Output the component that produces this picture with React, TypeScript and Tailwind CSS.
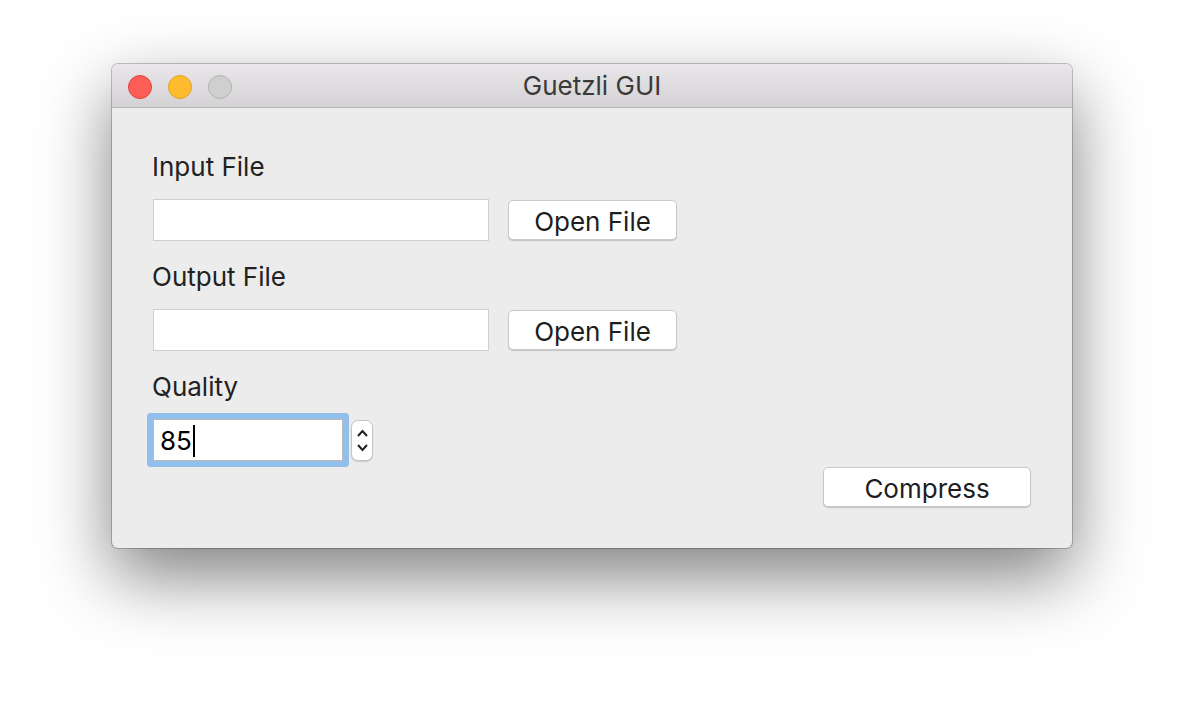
import React from "react";

const font = { fontFamily: 'Inter, "Liberation Sans", Arial, sans-serif' };

function Field() {
  return <div className="ml-[1px] w-[336px] h-[42px] bg-white border border-[#cfcfcf]" />;
}

function Btn({ label, w }: { label: string; w: string }) {
  return (
    <div
      className={`${w} h-[40px] pt-[3px] bg-white rounded-[5px] border border-[#c9c9c9] shadow-[0_1px_1px_rgba(0,0,0,0.18)] flex items-center justify-center text-[26px] leading-none text-[#1e1e1e]`}
    >
      {label}
    </div>
  );
}

export default function App() {
  return (
    <div className="w-[1184px] h-[708px] bg-white pl-[112px] pt-[64px]" style={font}>
      <div className="w-[960px] h-[484px] rounded-[6px] bg-[#ececec] shadow-[0_0_0_1px_rgba(0,0,0,0.22),0_28px_70px_rgba(0,0,0,0.5)] flex flex-col overflow-hidden">
        <div className="h-[44px] shrink-0 bg-gradient-to-b from-[#e9e7e9] to-[#d4d2d4] border-b border-[#b5b5b5] relative flex items-center justify-center">
          <div className="absolute left-[16px] top-[11px] flex gap-[16px]">
            <div className="w-[24px] h-[24px] rounded-full bg-[#fd5f57] border border-[#e0443e]" />
            <div className="w-[24px] h-[24px] rounded-full bg-[#febc2e] border border-[#dea123]" />
            <div className="w-[24px] h-[24px] rounded-full bg-[#d0cfd0] border border-[#b4b3b4]" />
          </div>
          <span className="text-[26px] text-[#3a3a3a] leading-none pt-[1px]">Guetzli GUI</span>
        </div>
        <div className="pl-[40px] pt-[45px] pr-[41px] flex flex-col">
          <div className="h-[28px] flex items-center text-[26px] leading-none text-[#222]">Input File</div>
          <div className="mt-[18px] flex items-center gap-[19px]">
            <Field />
            <Btn label="Open File" w="w-[169px]" />
          </div>
          <div className="mt-[22px] h-[28px] flex items-center text-[26px] leading-none text-[#222]">Output File</div>
          <div className="mt-[18px] flex items-center gap-[19px]">
            <Field />
            <Btn label="Open File" w="w-[169px]" />
          </div>
          <div className="mt-[22px] h-[28px] flex items-center text-[26px] leading-none text-[#222]">Quality</div>
          <div className="mt-[18px] flex items-center">
            <div className="ml-[1px] w-[190px] h-[42px] bg-white border border-[#b8b8b8] rounded-[1px] shadow-[0_0_0_6px_#93bfec] flex items-center pl-[6px] pt-[2px] text-[26px] leading-none text-black">
              85<span className="inline-block w-[2px] h-[32px] bg-black ml-[1px]" />
            </div>
            <div className="ml-[8px] w-[22px] h-[41px] bg-white border border-[#c4c4c4] rounded-[7px] shadow-[0_1px_1px_rgba(0,0,0,0.15)] flex flex-col items-center justify-center gap-[5px]">
              <svg width="13" height="9" viewBox="0 0 13 9"><path d="M2 7 L6.5 2 L11 7" fill="none" stroke="#222" strokeWidth="2" /></svg>
              <svg width="13" height="9" viewBox="0 0 13 9"><path d="M2 2 L6.5 7 L11 2" fill="none" stroke="#222" strokeWidth="2" /></svg>
            </div>
          </div>
          <div className="flex justify-end mt-[6px]">
            <Btn label="Compress" w="w-[208px]" />
          </div>
        </div>
      </div>
    </div>
  );
}
